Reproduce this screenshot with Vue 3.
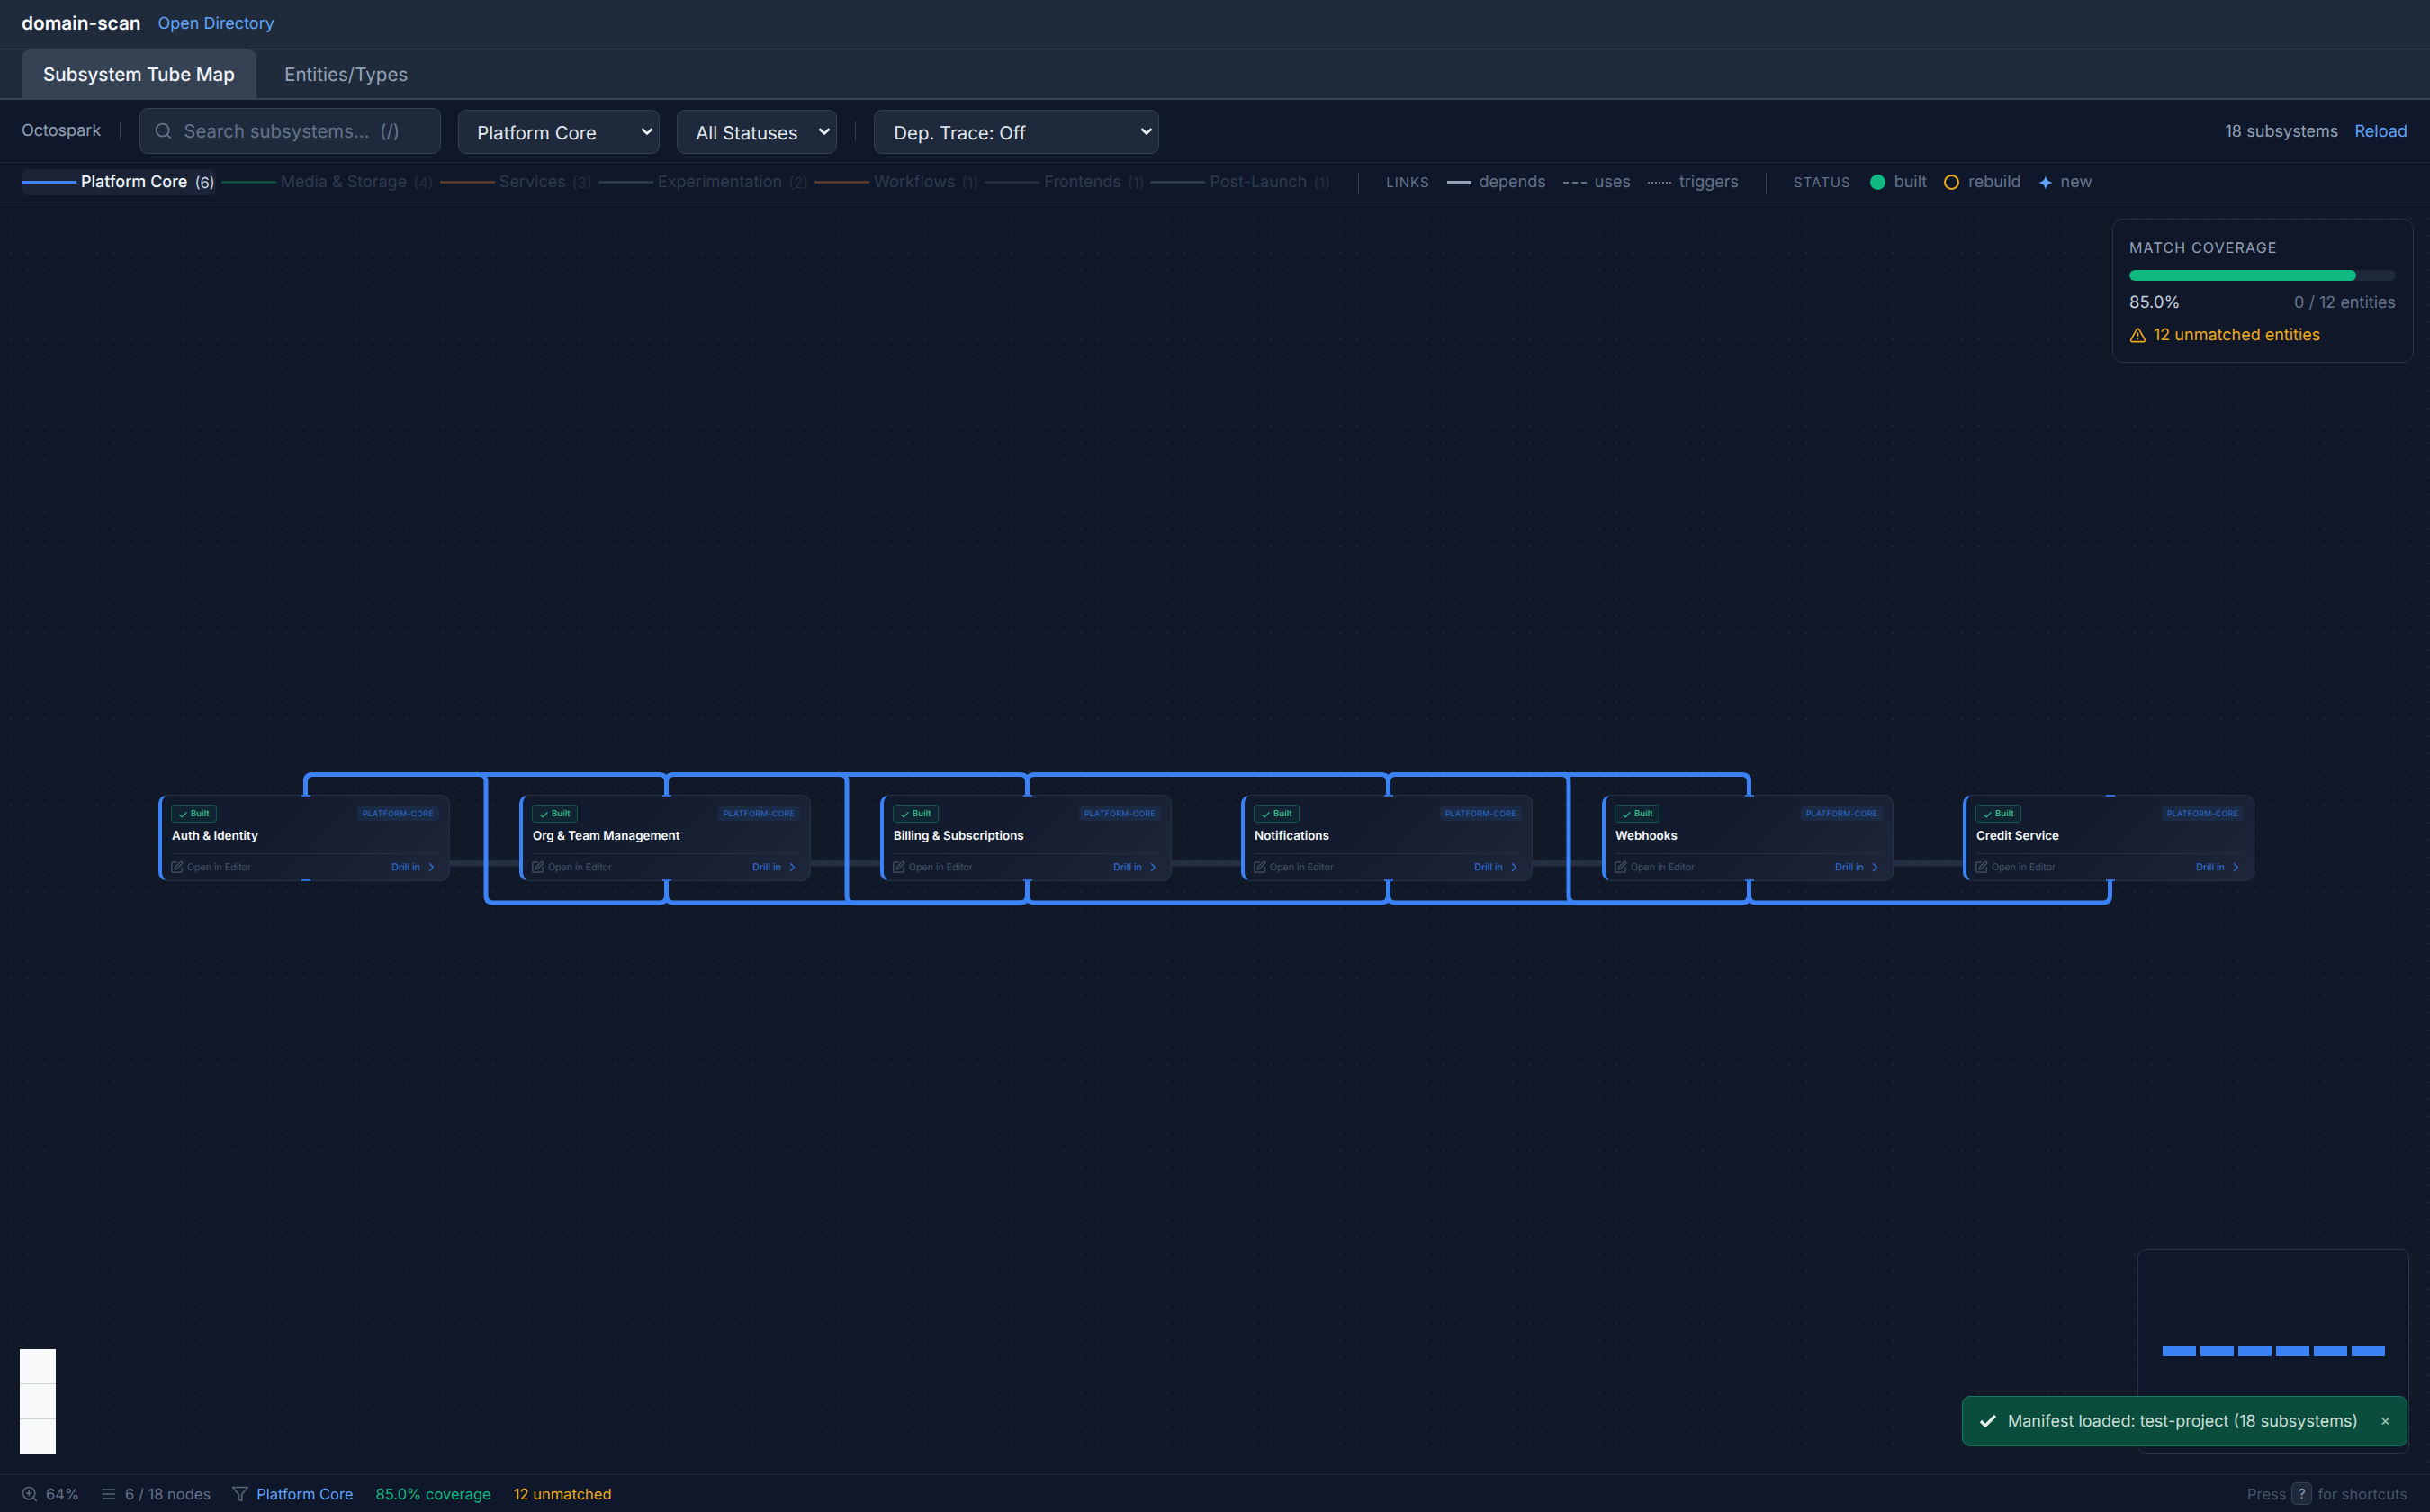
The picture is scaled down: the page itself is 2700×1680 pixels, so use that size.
<script setup>
const subsystems = [
  'Auth & Identity',
  'Org & Team Management',
  'Billing & Subscriptions',
  'Notifications',
  'Webhooks',
  'Credit Service',
]
const CARD_LEFT = 176
const STEP = 401
const nodes = subsystems.map((name, i) => ({ name, left: CARD_LEFT + STEP * i }))

const cx = (i) => 339.5 + STEP * i
const gap = (i) => 540 + STEP * i
const TOP = 883
const BOT = 979
const RAIL_T = 860.5
const RAIL_B = 1003

function route(points, r = 8) {
  let d = `M${points[0][0]} ${points[0][1]}`
  for (let i = 1; i < points.length - 1; i++) {
    const [px, py] = points[i - 1]
    const [x, y] = points[i]
    const [nx, ny] = points[i + 1]
    const l1 = Math.hypot(x - px, y - py)
    const l2 = Math.hypot(nx - x, ny - y)
    const a = [x - ((x - px) / l1) * r, y - ((y - py) / l1) * r]
    const b = [x + ((nx - x) / l2) * r, y + ((ny - y) / l2) * r]
    d += ` L${a[0]} ${a[1]} Q${x} ${y} ${b[0]} ${b[1]}`
  }
  const last = points[points.length - 1]
  return d + ` L${last[0]} ${last[1]}`
}

const overTop = (a, b) => route([[cx(a), TOP], [cx(a), RAIL_T], [cx(b), RAIL_T], [cx(b), TOP]])
const overBot = (a, b) => route([[cx(a), BOT], [cx(a), RAIL_B], [cx(b), RAIL_B], [cx(b), BOT]])
const weave = (a, g, b) =>
  route([[cx(a), TOP], [cx(a), RAIL_T], [gap(g), RAIL_T], [gap(g), RAIL_B], [cx(b), RAIL_B], [cx(b), BOT]])

const wires = [
  weave(0, 0, 1),
  overTop(0, 1),
  weave(1, 1, 2),
  overTop(1, 2),
  overBot(1, 2),
  overTop(2, 3),
  overBot(2, 3),
  weave(3, 3, 4),
  overTop(3, 4),
  overBot(3, 4),
  overBot(4, 5),
]

const lines = [
  { label: 'Media & Storage', count: 4, cls: 'l-green' },
  { label: 'Services', count: 3, cls: 'l-orange' },
  { label: 'Experimentation', count: 2, cls: 'l-slate' },
  { label: 'Workflows', count: 1, cls: 'l-orange' },
  { label: 'Frontends', count: 1, cls: 'l-dim' },
  { label: 'Post-Launch', count: 1, cls: 'l-slate' },
]
</script>

<template>
  <div class="app">
    <header class="topbar">
      <span class="title">domain-scan</span>
      <a class="open">Open Directory</a>
    </header>

    <nav class="tabs">
      <button class="tab active">Subsystem Tube Map</button>
      <button class="tab">Entities/Types</button>
    </nav>

    <section class="toolbar">
      <span class="project">Octospark</span>
      <span class="sep"></span>
      <label class="search">
        <svg class="search-icon" viewBox="0 0 24 24"><circle cx="11" cy="11" r="8" /><path d="m21 21-4.3-4.3" /></svg>
        <input placeholder="Search subsystems...  (/)" />
      </label>
      <select class="sel sel-domain"><option>Platform Core</option></select>
      <select class="sel sel-status"><option>All Statuses</option></select>
      <span class="sep sep-b"></span>
      <select class="sel sel-trace"><option>Dep. Trace: Off</option></select>
      <div class="tool-right">
        <span class="count">18 subsystems</span>
        <a class="reload">Reload</a>
      </div>
    </section>

    <section class="legend">
      <div class="lg-item lg-active">
        <span class="lg-line l-blue"></span>
        <span class="lg-name">Platform Core</span>
        <span class="lg-count">(6)</span>
      </div>
      <div v-for="l in lines" :key="l.label" class="lg-item">
        <span class="lg-line" :class="l.cls"></span>
        <span class="lg-name">{{ l.label }}</span>
        <span class="lg-count">({{ l.count }})</span>
      </div>
      <span class="lg-div"></span>
      <span class="lg-head">LINKS</span>
      <div class="key key-first"><span class="k-solid"></span><span>depends</span></div>
      <div class="key"><span class="k-dash"></span><span>uses</span></div>
      <div class="key"><span class="k-dot"></span><span>triggers</span></div>
      <span class="lg-div"></span>
      <span class="lg-head">STATUS</span>
      <div class="key key-status"><span class="s-built"></span><span>built</span></div>
      <div class="key"><span class="s-rebuild"></span><span>rebuild</span></div>
      <div class="key">
        <svg class="s-new" viewBox="0 0 16 16"><path d="M8 0 C8.8 4.6 11 7.2 16 8 C11 8.8 8.8 11.4 8 16 C7.2 11.4 5 8.8 0 8 C5 7.2 7.2 4.6 8 0Z" /></svg>
        <span>new</span>
      </div>
    </section>

    <main class="canvas">
      <svg class="wires" viewBox="0 225 2700 1413" width="2700" height="1413">
        <path class="tube" d="M338 959 H2344" />
        <path v-for="(d, i) in wires" :key="i" class="wire" :d="d" />
      </svg>

      <article v-for="n in nodes" :key="n.name" class="card" :style="{ left: n.left + 'px' }">
        <span class="handle handle-top"></span>
        <span class="handle handle-bot"></span>
        <div class="card-head">
          <span class="badge">
            <svg viewBox="0 0 24 24"><path d="M20 6 9 17l-5-5" /></svg>
            Built
          </span>
          <span class="chip">PLATFORM-CORE</span>
        </div>
        <div class="card-title">{{ n.name }}</div>
        <div class="card-foot">
          <span class="edit">
            <svg viewBox="0 0 24 24">
              <path d="M12 3H5a2 2 0 0 0-2 2v14a2 2 0 0 0 2 2h14a2 2 0 0 0 2-2v-7" />
              <path d="M18.375 2.625a1 1 0 0 1 3 3l-9.013 9.014a2 2 0 0 1-.853.505l-2.873.84a.5.5 0 0 1-.62-.62l.84-2.873a2 2 0 0 1 .506-.852z" />
            </svg>
            Open in Editor
          </span>
          <span class="drill">
            Drill in
            <svg viewBox="0 0 24 24"><path d="m9 18 6-6-6-6" /></svg>
          </span>
        </div>
      </article>

      <aside class="coverage">
        <div class="cov-title">MATCH COVERAGE</div>
        <div class="cov-track"><div class="cov-fill"></div></div>
        <div class="cov-row">
          <span class="cov-pct">85.0%</span>
          <span class="cov-ent">0 / 12 entities</span>
        </div>
        <div class="cov-warn">
          <svg viewBox="0 0 24 24">
            <path d="m21.73 18-8-14a2 2 0 0 0-3.48 0l-8 14A2 2 0 0 0 4 21h16a2 2 0 0 0 1.73-3" />
            <path d="M12 9v4" />
            <path d="M12 17h.01" />
          </svg>
          12 unmatched entities
        </div>
      </aside>

      <div class="controls">
        <button></button>
        <button></button>
        <button></button>
      </div>

      <div class="minimap">
        <span v-for="n in nodes" :key="n.name" class="mini-node"></span>
      </div>

      <div class="toast">
        <svg class="toast-check" viewBox="0 0 24 24"><path d="M20 6 9 17l-5-5" /></svg>
        <span class="toast-text">Manifest loaded: test-project (18 subsystems)</span>
        <span class="toast-x">×</span>
      </div>
    </main>

    <footer class="statusbar">
      <span class="st">
        <svg viewBox="0 0 24 24"><circle cx="11" cy="11" r="8" /><path d="m21 21-4.3-4.3" /><path d="M11 8v6" /><path d="M8 11h6" /></svg>
        64%
      </span>
      <span class="st">
        <svg viewBox="0 0 24 24"><path d="M4 6h16" /><path d="M4 12h16" /><path d="M4 18h16" /></svg>
        6 / 18 nodes
      </span>
      <span class="st">
        <svg viewBox="0 0 24 24"><path d="M22 3H2l8 9.46V19l4 2v-8.54z" /></svg>
        <span class="st-blue">Platform Core</span>
      </span>
      <span class="st-green">85.0% coverage</span>
      <span class="st-amber">12 unmatched</span>
      <span class="st-help">Press <kbd>?</kbd> for shortcuts</span>
    </footer>
  </div>
</template>

<style scoped>
* { box-sizing: border-box; text-rendering: geometricPrecision; }
.app {
  width: 2700px;
  height: 1680px;
  display: flex;
  flex-direction: column;
  overflow: hidden;
  font-family: Inter, "Liberation Sans", sans-serif;
  background: #111827;
  color: #e2e8f0;
  font-size: 18px;
}
svg { fill: none; stroke: currentColor; stroke-linecap: round; stroke-linejoin: round; stroke-width: 2; flex: none; }

.topbar {
  height: 55px;
  flex: none;
  display: flex;
  align-items: center;
  gap: 19px;
  padding: 0 24px 1px;
  background: #1f2a3a;
  border-bottom: 1px solid #334155;
}
.title { font-size: 20.8px; font-weight: 600; color: #f8fafc; }
.open { font-size: 18px; color: #60a5fa; }

.tabs {
  height: 56px;
  flex: none;
  display: flex;
  gap: 7px;
  padding: 0 24px;
  background: #1f2a3a;
  border-bottom: 2px solid #334155;
}
.tab {
  height: 54px;
  padding: 0 24px;
  border: 0;
  border-radius: 9px 9px 0 0;
  background: transparent;
  color: #94a3b8;
  font: 400 20.6px Inter, sans-serif;
}
.tab.active { background: #354254; color: #f1f5f9; font-weight: 500; }

.toolbar {
  height: 70px;
  flex: none;
  display: flex;
  align-items: center;
  gap: 19px;
  padding: 0 25px 0 24px;
  background: #0f172a;
  border-bottom: 1px solid #1e293b;
}
.project { font-size: 18px; color: #94a3b8; }
.sep { width: 1px; height: 21px; margin: 0 2px; background: #334155; }
.sep-b { margin: 0 1px; }
.search {
  width: 335px;
  height: 51px;
  display: flex;
  align-items: center;
  gap: 12px;
  padding-left: 15px;
  background: #1e293b;
  border: 1px solid #334155;
  border-radius: 9px;
}
.search-icon { width: 21px; height: 21px; color: #64748b; stroke-width: 2; }
.search input {
  flex: 1;
  min-width: 0;
  padding: 0;
  border: 0;
  outline: 0;
  background: transparent;
  color: #e2e8f0;
  font: 400 20.4px Inter, sans-serif;
  white-space: pre;
}
.search input::placeholder { color: #64748b; opacity: 1; }
.sel {
  height: 49px;
  margin-top: 1px;
  padding: 3px 30px 0 20px;
  appearance: none;
  background-color: #1e293b;
  background-image: url("data:image/svg+xml,%3Csvg xmlns='http://www.w3.org/2000/svg' viewBox='0 0 14 8'%3E%3Cpath d='M1.5 1.2 7 6.4l5.5-5.2' fill='none' stroke='%23f1f5f9' stroke-width='2.6'/%3E%3C/svg%3E");
  background-repeat: no-repeat;
  background-size: 14px 8px;
  background-position: right 6px center;
  border: 1px solid #334155;
  border-radius: 9px;
  color: #e2e8f0;
  font: 400 20.4px Inter, sans-serif;
  outline: 0;
}
.sel-domain { width: 224px; }
.sel-status { width: 178px; }
.sel-trace { width: 317px; padding-left: 21px; }
.tool-right { margin-left: auto; display: flex; align-items: center; gap: 18px; }
.count { color: #94a3b8; font-size: 18.1px; }
.reload { color: #60a5fa; font-size: 18.1px; }

.legend {
  height: 44px;
  flex: none;
  display: flex;
  align-items: center;
  gap: 6px;
  padding: 0 0 0 24px;
  background: #0f172a;
  border-bottom: 1px solid #1e293b;
}
.lg-item {
  height: 29px;
  display: flex;
  align-items: center;
  color: #2e3b4e;
  padding-right: 1px;
  border-radius: 6px;
  white-space: nowrap;
}
.lg-active { background: #1a2436; color: #f1f5f9; font-weight: 500; }
.lg-line { width: 61px; height: 3px; margin-right: 5px; flex: none; }
.l-blue { background: #3b82f6; }
.l-green { background: #0f4a3c; }
.l-orange { background: #543829; }
.l-slate { background: #2a384c; }
.l-dim { background: #222e40; }
.lg-count { margin-left: 7px; font-size: 16.5px; color: #232f41; font-weight: 400; }
.lg-active .lg-count { color: #cbd5e1; margin-left: 8px; }
.lg-div { width: 1px; height: 24px; margin: 0 24px; background: #334155; }
.lg-head { font-size: 15px; letter-spacing: 1px; color: #64748b; }
.key { display: flex; align-items: center; gap: 9px; margin-left: 13px; color: #64748b; font-size: 18px; white-space: nowrap; }
.key-first { margin-left: 13px; }
.key-status { margin-left: 15px; }
.k-solid { width: 27px; height: 4px; background: #94a3b8; }
.k-dash { width: 26px; border-top: 2px dashed #64748b; }
.k-dot { width: 26px; border-top: 2px dotted #64748b; }
.s-built { width: 17px; height: 17px; border-radius: 50%; background: #10b981; margin-right: 1px; }
.s-rebuild { width: 17px; height: 17px; border-radius: 50%; border: 2.5px solid #eeaa1c; margin-right: 1px; }
.s-new { width: 16px; height: 16px; fill: #60a5fa; stroke: none; }

.canvas {
  position: relative;
  flex: 1;
  min-height: 0;
  overflow: hidden;
  background-color: #111827;
  background-image: radial-gradient(circle, #1d2737 1px, transparent 1.2px);
  background-size: 19.2px 19.2px;
  background-position: 2px 8px;
}
.wires { position: absolute; left: 0; top: 0; }
.wire { stroke: #3b82f6; stroke-width: 5; stroke-linecap: butt; fill: none; }
.tube { stroke: #232f42; stroke-width: 7; stroke-linecap: butt; }

.card {
  position: absolute;
  top: 658px;
  width: 324px;
  height: 96px;
  display: flex;
  flex-direction: column;
  padding: 10px 12px 0 11px;
  background: linear-gradient(135deg, #111a2c 0%, #141d30 45%, #1d2739 100%);
  border: 1px solid #263346;
  border-left: 4px solid #3b82f6;
  border-radius: 10px;
}
.handle { position: absolute; left: 50%; width: 10px; height: 2px; margin-left: -5px; background: #2f6ed6; }
.handle-top { top: -1px; }
.handle-bot { bottom: -1px; }
.card-head { display: flex; align-items: center; justify-content: space-between; height: 20px; }
.badge {
  width: 51px;
  height: 20px;
  margin-left: -1px;
  display: flex;
  align-items: center;
  gap: 3px;
  padding-left: 7px;
  border: 1px solid #0d5c48;
  border-radius: 4px;
  background: rgba(16, 185, 129, 0.06);
  color: #34b98a;
  font-size: 9.6px;
  font-weight: 600;
}
.badge svg { width: 11px; height: 11px; stroke-width: 2.4; margin-top: 2px; }
.chip {
  width: 91px;
  height: 16px;
  margin-right: -1px;
  display: flex;
  align-items: center;
  justify-content: center;
  border-radius: 4px;
  background: #1b2a45;
  color: #2f6ed6;
  font-size: 8.8px;
  font-weight: 400;
  letter-spacing: 0.3px;
  white-space: nowrap;
}
.card-title {
  height: 16px;
  margin-top: 7px;
  color: #f8fafc;
  font-size: 13.4px;
  font-weight: 600;
  line-height: 16px;
  white-space: nowrap;
}
.card-foot {
  flex: 1;
  margin-top: 11px;
  display: flex;
  align-items: center;
  justify-content: space-between;
  border-top: 1px solid #232f42;
}
.edit { display: flex; align-items: center; gap: 4px; color: #475569; font-size: 10.6px; }
.edit svg { width: 15px; height: 15px; margin-left: -2px; }
.drill { display: flex; align-items: center; gap: 5px; color: #2f6ed6; font-size: 10.6px; font-weight: 500; }
.drill svg { width: 15px; height: 15px; stroke-width: 2.2; }

.coverage {
  position: absolute;
  top: 18px;
  right: 18px;
  width: 335px;
  height: 160px;
  padding: 21px 19px 0 18px;
  background: rgba(15, 23, 42, 0.85);
  border: 1px solid #273449;
  border-radius: 12px;
}
.cov-title { height: 20px; line-height: 20px; font-size: 16px; font-weight: 400; letter-spacing: 1.15px; color: #94a3b8; white-space: nowrap; }
.cov-track { height: 12px; margin-top: 15px; background: #1e293b; border-radius: 6px; overflow: hidden; }
.cov-fill { width: 85%; height: 100%; background: #10b981; border-radius: 6px; }
.cov-row { display: flex; justify-content: space-between; align-items: center; height: 24px; margin-top: 12px; }
.cov-pct { font-size: 18.4px; color: #cbd5e1; }
.cov-ent { font-size: 18px; color: #64748b; }
.cov-warn { display: flex; align-items: center; gap: 8px; height: 24px; margin-top: 12px; color: #eeaa1c; font-size: 18px; white-space: nowrap; }
.cov-warn svg { width: 19px; height: 19px; }

.controls {
  position: absolute;
  left: 22px;
  bottom: 22px;
  width: 40px;
  display: flex;
  flex-direction: column;
}
.controls button {
  height: 39px;
  padding: 0;
  border: 0;
  border-bottom: 1px solid #c8d8d0;
  background: #f8fafc;
}
.controls button:last-child { border-bottom: 0; }

.minimap {
  position: absolute;
  right: 23px;
  bottom: 23px;
  width: 302px;
  height: 227px;
  display: flex;
  align-items: center;
  justify-content: center;
  gap: 5px;
  background: #0f172a;
  border: 1px solid #2a3547;
  border-radius: 9px;
}
.mini-node { width: 37px; height: 11px; background: #3b82f6; }

.toast {
  position: absolute;
  right: 25px;
  bottom: 31px;
  width: 495px;
  height: 56px;
  display: flex;
  align-items: center;
  padding-left: 16px;
  background: #0a4d3c;
  border: 1px solid #0f7f5e;
  border-radius: 9px;
  color: #c9dfd8;
}
.toast-check { width: 24px; height: 24px; stroke-width: 3.3; stroke-linecap: butt; color: #e2efe9; }
.toast-text { margin-left: 10px; font-size: 18px; white-space: nowrap; }
.toast-x { margin-left: auto; margin-right: 18px; font-size: 17px; color: #a8c6bc; }

.statusbar {
  height: 42px;
  flex: none;
  display: flex;
  align-items: center;
  gap: 25px;
  padding: 0 25px;
  background: #0f172a;
  border-top: 1px solid #1e293b;
  font-size: 16.5px;
  color: #64748b;
}
.st { display: flex; align-items: center; gap: 10px; white-space: nowrap; }
.st svg { width: 20px; height: 20px; margin: 0 -2px; color: #566579; }
.st-blue { color: #60a5fa; }
.st-green { color: #10b981; }
.st-amber { color: #eeaa1c; }
.st-help { margin-left: auto; display: flex; align-items: center; gap: 6px; color: #475569; white-space: nowrap; }
kbd {
  width: 23px;
  height: 25px;
  display: inline-flex;
  align-items: center;
  justify-content: center;
  background: #1e293b;
  border: 1px solid #334155;
  border-radius: 5px;
  color: #94a3b8;
  font: 400 15px Inter, sans-serif;
}
</style>
